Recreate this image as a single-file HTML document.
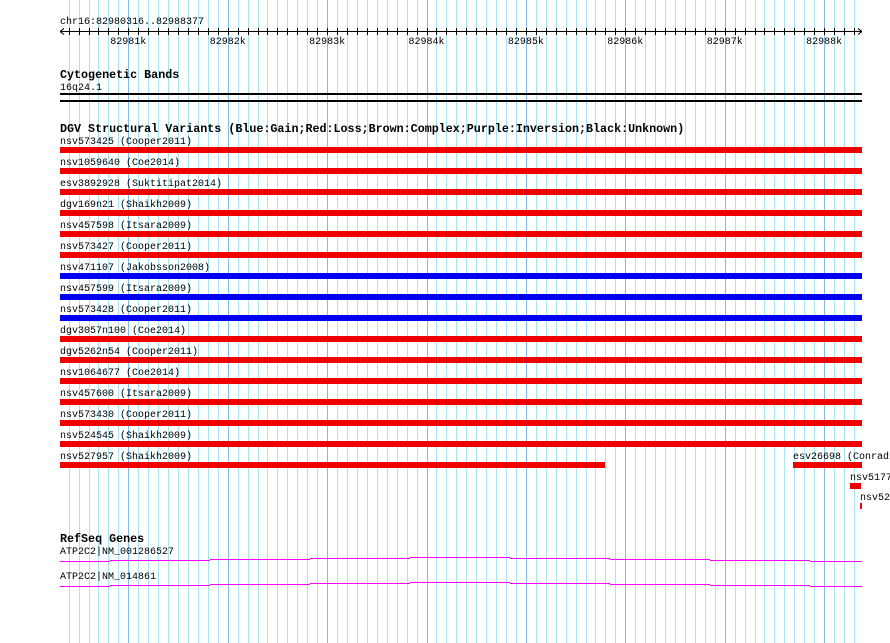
<!DOCTYPE html>
<html><head><meta charset="utf-8"><style>
html,body{margin:0;padding:0;background:#fff;width:890px;height:643px;overflow:hidden}
svg{display:block}
text{font-family:"Liberation Mono","DejaVu Sans Mono",monospace;font-size:10px;fill:#000}
.b{font-weight:bold;font-size:11.7px}
</style></head><body>
<svg id="s" width="890" height="643" xmlns="http://www.w3.org/2000/svg" shape-rendering="crispEdges"></svg>
<script>
var s=document.getElementById('s'),h='';
for(var n=-7;n<74;n++){var x=128.3+9.94*n;if(x<59||x>856)continue;x=Math.round(x)+0.5;
 var maj=(n%10===0);h+='<line x1="'+x+'" y1="0" x2="'+x+'" y2="643" stroke="'+(maj?'#7dbde6':'#a8e6ef')+'" stroke-width="1"/>';}
// ruler
h+='<line x1="60" y1="31.5" x2="862" y2="31.5" stroke="#000"/>';
h+='<path d="M60 31.5 l4 -3 M60 31.5 l4 3 M862 31.5 l-4 -3 M862 31.5 l-4 3" stroke="#000" fill="none"/>';
for(var n=-6;n<74;n++){var x=128.3+9.94*n;if(x<62||x>858)continue;x=Math.round(x)+0.5;h+='<line x1="'+x+'" y1="28" x2="'+x+'" y2="35" stroke="#000"/>';}
for(var k=0;k<8;k++){var x=128.3+99.4*k;h+='<text x="'+x+'" y="44" text-anchor="middle">'+(82981+k)+'k</text>';}
h+='<text x="60" y="24">chr16:82980316..82988377</text>';
h+='<text class="b" x="60" y="78">Cytogenetic Bands</text><text x="60" y="90">16q24.1</text>';
h+='<rect x="60" y="93" width="802" height="2" fill="#000"/><rect x="60" y="100" width="802" height="2" fill="#000"/>';
h+='<text class="b" x="60" y="132">DGV Structural Variants (Blue:Gain;Red:Loss;Brown:Complex;Purple:Inversion;Black:Unknown)</text>';
var rows=[['nsv573425 (Cooper2011)','r'],['nsv1059640 (Coe2014)','r'],['esv3892928 (Suktitipat2014)','r'],['dgv169n21 (Shaikh2009)','r'],['nsv457598 (Itsara2009)','r'],['nsv573427 (Cooper2011)','r'],['nsv471107 (Jakobsson2008)','b'],['nsv457599 (Itsara2009)','b'],['nsv573428 (Cooper2011)','b'],['dgv3057n100 (Coe2014)','r'],['dgv5262n54 (Cooper2011)','r'],['nsv1064677 (Coe2014)','r'],['nsv457600 (Itsara2009)','r'],['nsv573430 (Cooper2011)','r'],['nsv524545 (Shaikh2009)','r']];
for(var i=0;i<rows.length;i++){var y=140+21*i;h+='<text x="60" y="'+(y+4)+'">'+rows[i][0]+'</text><rect x="60" y="'+(y+7)+'" width="802" height="6" fill="'+(rows[i][1]=='b'?'#0000ee':'#ee0000')+'"/>';}
var y=455;
h+='<text x="60" y="'+(y+4)+'">nsv527957 (Shaikh2009)</text><rect x="60" y="'+(y+7)+'" width="545" height="6" fill="#ee0000"/>';
h+='<text x="793" y="'+(y+4)+'">esv26698 (Conrad2009)</text><rect x="793" y="'+(y+7)+'" width="69" height="6" fill="#ee0000"/>';
h+='<text x="850" y="480">nsv517770</text><rect x="850" y="483" width="11" height="6" fill="#ee0000"/>';
h+='<text x="860" y="500">nsv521</text><rect x="860" y="503" width="2" height="6" fill="#ee0000"/>';
h+='<text class="b" x="60" y="542">RefSeq Genes</text>';
h+='<text x="60" y="554">ATP2C2|NM_001286527</text><text x="60" y="579">ATP2C2|NM_014861</text>';
var seg=[[60,110,0],[110,210,-1],[210,310,-2],[310,410,-3],[410,510,-4],[510,610,-3],[610,710,-2],[710,810,-1],[810,862,0]];
[561,586].forEach(function(b){seg.forEach(function(g){h+='<rect x="'+g[0]+'" y="'+(b+g[2])+'" width="'+(g[1]-g[0])+'" height="1" fill="#ff00ff"/>';});});
s.innerHTML=h;
</script>
</body></html>
